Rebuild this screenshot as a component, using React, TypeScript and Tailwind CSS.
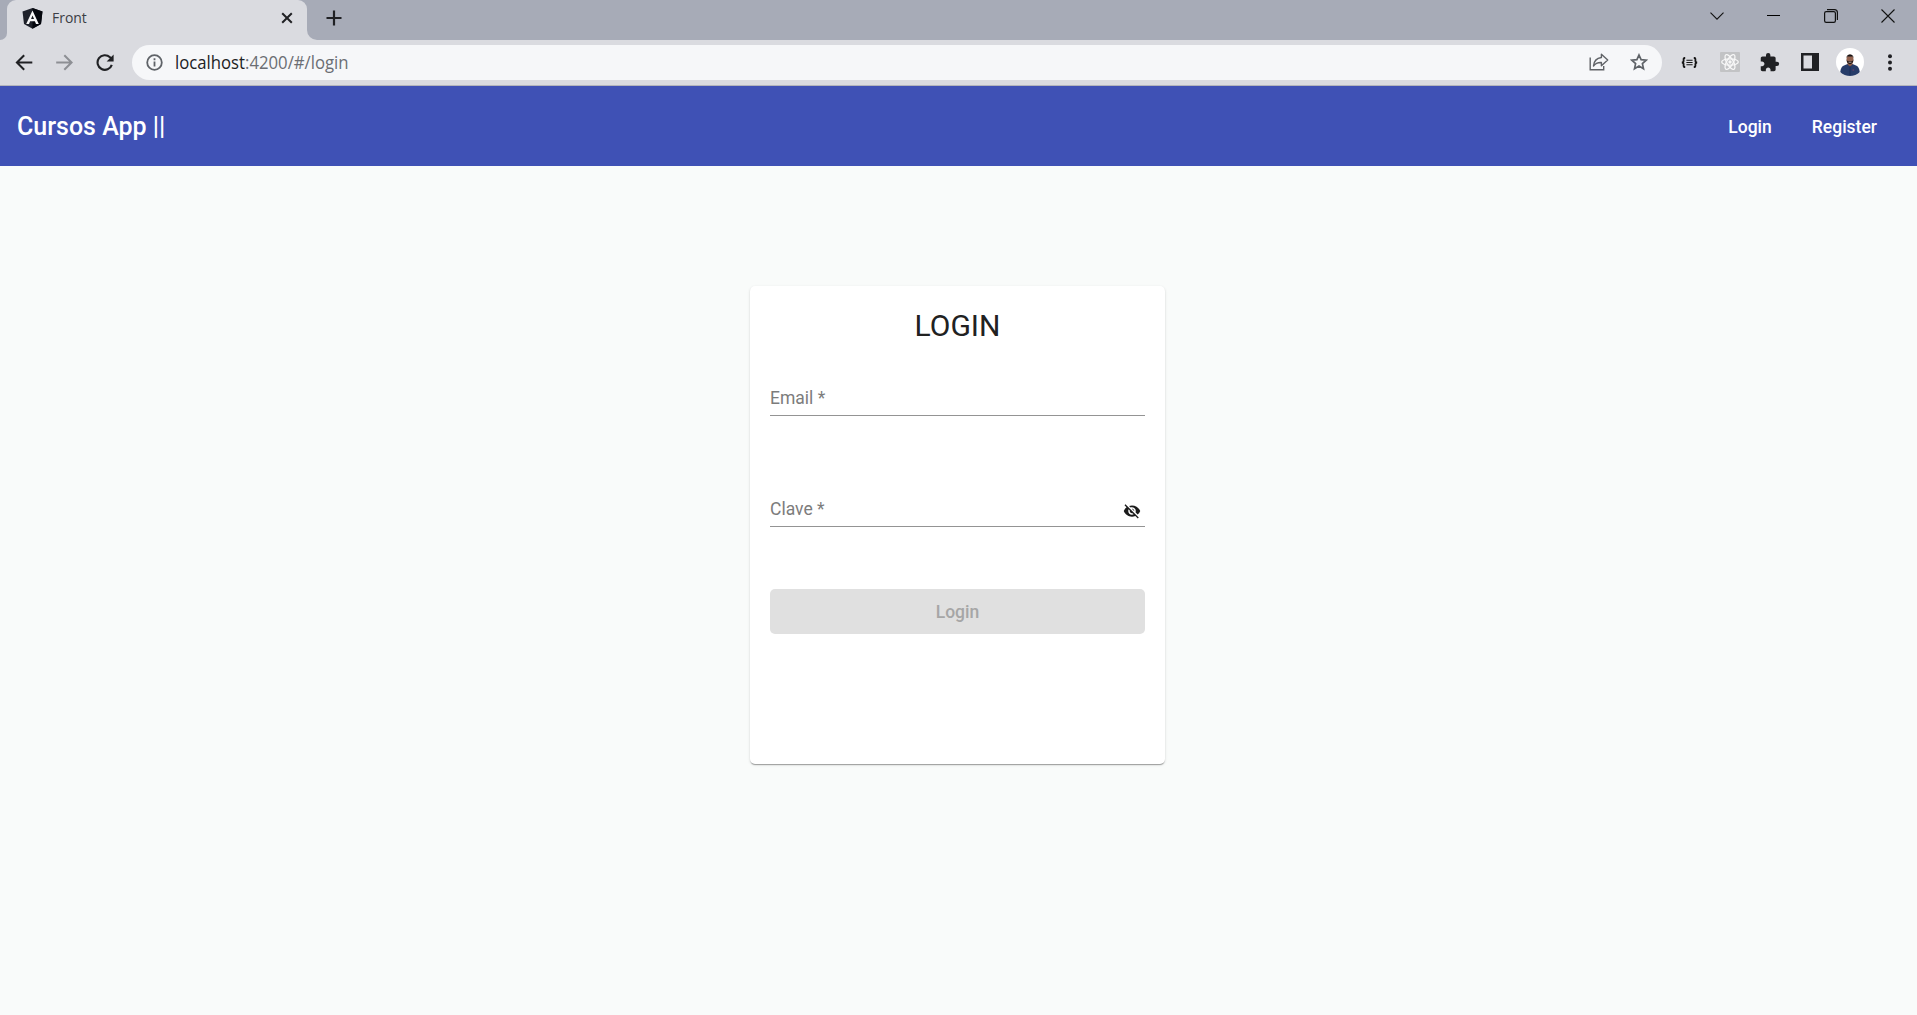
import type { ReactNode } from "react";
import { MdExtension, MdVisibilityOff } from "react-icons/md";

function Slot({ children }: { children: ReactNode }) {
  return <div className="flex h-full w-10 shrink-0 items-center justify-center">{children}</div>;
}

function WindowButton({ children }: { children: ReactNode }) {
  return <div className="flex h-[31px] w-[57px] items-center justify-center text-[#111]">{children}</div>;
}

function AngularLogo() {
  return (
    <svg width="21" height="21" viewBox="0 0 21 21">
      <path d="M10.5 0 20.5 3.4 19 16 10.5 20.8 2 16 .5 3.4Z" fill="#1f222b" />
      <path d="M10.5 0 20.5 3.4 19 16 10.5 20.8Z" fill="#05070e" />
      <path
        fillRule="evenodd"
        d="M10.5 2.5 4.2 16h2.8l1.1-2.800h4.800l1.100 2.800h2.800ZM10.500 7.400l1.500 3.600H9Z"
        fill="#f7f7f8"
      />
    </svg>
  );
}

function TabStrip() {
  return (
    <div className="flex h-10 bg-[#a7abb7]">
      <div className="h-10 w-[7px] bg-[#dadbe0]">
        <div className="h-10 w-[7px] rounded-br-[8px] bg-[#a7abb7]" />
      </div>
      <div className="flex h-10 w-[300px] items-center rounded-t-[9px] bg-[#dadbe0] pr-[14px] pl-[15px] pb-1">
        <AngularLogo />
        <span className="ml-[9px] origin-left scale-x-[0.93] pb-[2px] font-['Open_Sans',sans-serif] text-[15px] leading-5 text-[#3b3e45]">
          Front
        </span>
        <svg className="ml-auto" width="12" height="12" viewBox="0 0 12 12" stroke="#202124" strokeWidth="2">
          <path d="M1.2 1.2 10.8 10.8M10.8 1.2 1.2 10.8" />
        </svg>
      </div>
      <div className="h-10 w-[10px] bg-[#dadbe0]">
        <div className="h-10 w-[10px] rounded-bl-[10px] bg-[#a7abb7]" />
      </div>
      <div className="flex h-9 w-[34px] items-center justify-center">
        <svg width="16" height="16" viewBox="0 0 16 16" stroke="#202124" strokeWidth="2.2">
          <path d="M8 .5V15.5M.5 8H15.5" />
        </svg>
      </div>
      <div className="mr-px ml-auto flex">
        <WindowButton>
          <svg width="14" height="8" viewBox="0 0 14 8" fill="none" stroke="currentColor" strokeWidth="1.1">
            <path d="M.5.7 7 7.2 13.5.7" />
          </svg>
        </WindowButton>
        <WindowButton>
          <div className="h-px w-[13px] bg-black" />
        </WindowButton>
        <WindowButton>
          <svg width="14" height="14" viewBox="0 0 14 14" fill="none" stroke="currentColor" strokeWidth="1.2">
            <rect x=".6" y="2.6" width="10.8" height="10.8" rx="1.6" />
            <path d="M3 .6h7.4a3 3 0 0 1 3 3V11" />
          </svg>
        </WindowButton>
        <WindowButton>
          <svg width="14" height="14" viewBox="0 0 14 14" stroke="currentColor" strokeWidth="1.1">
            <path d="M.5.5 13.5 13.5M13.5.5.5 13.5" />
          </svg>
        </WindowButton>
      </div>
    </div>
  );
}

function Avatar() {
  return (
    <svg width="28" height="28" viewBox="0 0 28 28">
      <defs>
        <clipPath id="avatar-clip">
          <circle cx="14" cy="14" r="14" />
        </clipPath>
      </defs>
      <g clipPath="url(#avatar-clip)">
        <rect width="28" height="28" fill="#fff" />
        <path d="M4 28c.2-6 1-9 3.500-10.200L11.500 16h5l4 1.800C23 19 23.800 22 24 28Z" fill="#263c69" />
        <path d="M11.500 14h5v2.500L14 18.500l-2.500-2Z" fill="#8c5d49" />
        <ellipse cx="14" cy="11.300" rx="3.500" ry="4.800" fill="#93634f" />
        <path d="M10.300 10.500c-.4-5.500 7.800-5.500 7.400 0l-.7-2h-6Z" fill="#171516" />
        <path d="M10.600 12c0 5.500 6.800 5.500 6.800 0l-1.400 1.300h-4Z" fill="#241b1a" />
        <path d="M12.600 14.300h2.800" stroke="#d9c4b8" strokeWidth=".7" />
        <path d="M14 18.500V27" stroke="#172a50" strokeWidth=".7" />
        <path d="M16.500 22h1.600" stroke="#7b3f68" strokeWidth="1" />
      </g>
    </svg>
  );
}

function Toolbar() {
  return (
    <div className="flex h-[46px] items-center border-b border-[#b3b5bc] bg-[#dadbe0] pr-[7px] pb-px pl-[4px]">
      <Slot>
        <svg width="18" height="17" viewBox="0 0 18 17" fill="none" stroke="#202124" strokeWidth="2">
          <path d="M17.300 8.500H2.200M9.200 1.200 1.900 8.500l7.300 7.300" />
        </svg>
      </Slot>
      <Slot>
        <svg width="18" height="17" viewBox="0 0 18 17" fill="none" stroke="#8d8f94" strokeWidth="2">
          <path d="M1.200 8.500h15.100M9.300 1.200l7.300 7.300-7.300 7.300" />
        </svg>
      </Slot>
      <Slot>
        <svg className="ml-[2px]" width="18" height="17" viewBox="0 0 18 17" fill="none" stroke="#202124" strokeWidth="2.100">
          <path d="M15.800 10.800A7.300 7.300 0 1 1 14 3.300l1.500 1.500" />
          <path d="M17.600.4v7h-7Z" fill="#202124" stroke="none" />
        </svg>
      </Slot>
      <div className="ml-2 flex h-[35px] w-[1530px] items-center rounded-full bg-[#f6f7f9] pr-[3px] pl-[14px] text-[#5f6368]">
        <svg width="17" height="17" viewBox="0 0 17 17" fill="none" stroke="currentColor" strokeWidth="1.800">
          <circle cx="8.500" cy="8.500" r="7.300" />
          <path d="M8.500 7.500v5M8.500 4.300v1.900" />
        </svg>
        <span className="ml-[12px] origin-left scale-x-[0.955] font-['Open_Sans',sans-serif] text-[17.500px] leading-6 whitespace-nowrap text-[#6b6e73]">
          <span className="text-[#202124]">localhost</span>:4200/#/login
        </span>
        <div className="ml-auto flex h-full items-center">
          <Slot>
            <svg width="20" height="18" viewBox="0 0 20 18" fill="none" stroke="#606367" strokeWidth="1.400">
              <path d="M1.200 4.500v12.300h13.500V13" />
              <path d="M12.400 1.200 18.700 7l-6.300 5.700V9.500c-3.800-.2-6 .8-7.900 3.500.4-4.800 3-7.900 7.900-8.500Z" strokeLinejoin="round" />
            </svg>
          </Slot>
          <Slot>
            <svg width="18" height="18" viewBox="0 0 18 18" fill="none" stroke="currentColor" strokeWidth="1.700">
              <path d="M9 2 11.100 6.700 16.200 7.200 12.400 10.600 13.500 15.700 9 13 4.500 15.700 5.600 10.600 1.800 7.200 6.900 6.700Z" />
            </svg>
          </Slot>
        </div>
      </div>
      <div className="ml-auto flex h-full items-center">
        <Slot>
          <svg className="mr-[2px]" width="17" height="11" viewBox="0 0 17 11" fill="none" stroke="#151515" strokeWidth="1.800">
            <path d="M4.200 1H3.500Q2.600 1 2.600 2v1.700q0 1.800-1.800 1.800 1.800 0 1.800 1.800V9q0 1 .9 1h.7M12.800 1h.7q.9 0 .9 1v1.700q0 1.800 1.800 1.800-1.800 0-1.800 1.800V9q0 1-.9 1h-.7" />
            <path d="M5.400 3.200h6.200M5.400 5.500h6.200M5.400 7.800h6.200" strokeWidth="1.100" />
          </svg>
        </Slot>
        <Slot>
          <svg className="mr-px" width="20" height="20" viewBox="0 0 20 20" fill="none" stroke="#f8f8f8" strokeWidth="1.300">
            <rect width="20" height="20" rx="1" fill="#c2c3c5" stroke="none" />
            <ellipse cx="10" cy="10" rx="8.300" ry="3.200" />
            <ellipse cx="10" cy="10" rx="8.300" ry="3.200" transform="rotate(60 10 10)" />
            <ellipse cx="10" cy="10" rx="8.300" ry="3.200" transform="rotate(120 10 10)" />
            <circle cx="10" cy="10" r="1.700" fill="#f8f8f8" stroke="none" />
          </svg>
        </Slot>
        <Slot>
          <MdExtension className="mr-px" size={21} color="#202124" />
        </Slot>
        <Slot>
          <svg className="mr-px" width="18" height="18" viewBox="0 0 18 18">
            <rect width="18" height="18" fill="#202124" />
            <rect x="2.500" y="2.500" width="8.500" height="13" fill="#dadbe0" />
          </svg>
        </Slot>
        <Slot>
          <Avatar />
        </Slot>
        <Slot>
          <svg className="mr-px" width="4" height="17" viewBox="0 0 4 17" fill="#202124">
            <circle cx="2" cy="2.200" r="2" />
            <circle cx="2" cy="8.500" r="2" />
            <circle cx="2" cy="14.800" r="2" />
          </svg>
        </Slot>
      </div>
    </div>
  );
}

function Field({ label, icon }: { label: string; icon?: ReactNode }) {
  return (
    <div className="flex h-9 items-center justify-between border-b border-[#949494] text-[#7c7c7c]">
      <span className="text-[17.500px] leading-5">{label}</span>
      {icon}
    </div>
  );
}

export default function App() {
  return (
    <div className="flex h-[1015px] w-[1917px] flex-col overflow-hidden bg-[#f9fbfa] font-[Roboto,sans-serif]">
      <TabStrip />
      <Toolbar />
      <header className="flex h-20 items-center justify-between bg-[#3f51b5] pt-[2px] pr-10 pl-[17px] font-medium text-white">
        <h1 className="text-[25px] leading-8">Cursos App ||</h1>
        <nav className="flex gap-10 text-[17.500px] leading-6">
          <a>Login</a>
          <a>Register</a>
        </nav>
      </header>
      <main className="flex justify-center pt-[120px] pr-[2px]">
        <form className="flex h-[478px] w-[415px] flex-col rounded-[5px] bg-white px-5 pt-5 shadow-[0_2px_1px_-1px_rgba(0,0,0,0.2),0_1px_1px_0_rgba(0,0,0,0.14),0_1px_3px_0_rgba(0,0,0,0.12)]">
          <h2 className="text-center text-[30px] leading-[39px] text-[#212121]">LOGIN</h2>
          <div className="mt-[35px]">
            <Field label="Email *" />
          </div>
          <div className="mt-[75px]">
            <Field
              label="Clave *"
              icon={<MdVisibilityOff className="mt-[4px] mr-1" size={18} color="#1b1b1b" />}
            />
          </div>
          <button
            type="button"
            disabled
            className="mt-[62px] h-[45px] rounded-[5px] bg-[#e0e0e0] pt-[2px] text-[17.500px] font-medium text-[#a6a6a6]"
          >
            Login
          </button>
        </form>
      </main>
    </div>
  );
}
